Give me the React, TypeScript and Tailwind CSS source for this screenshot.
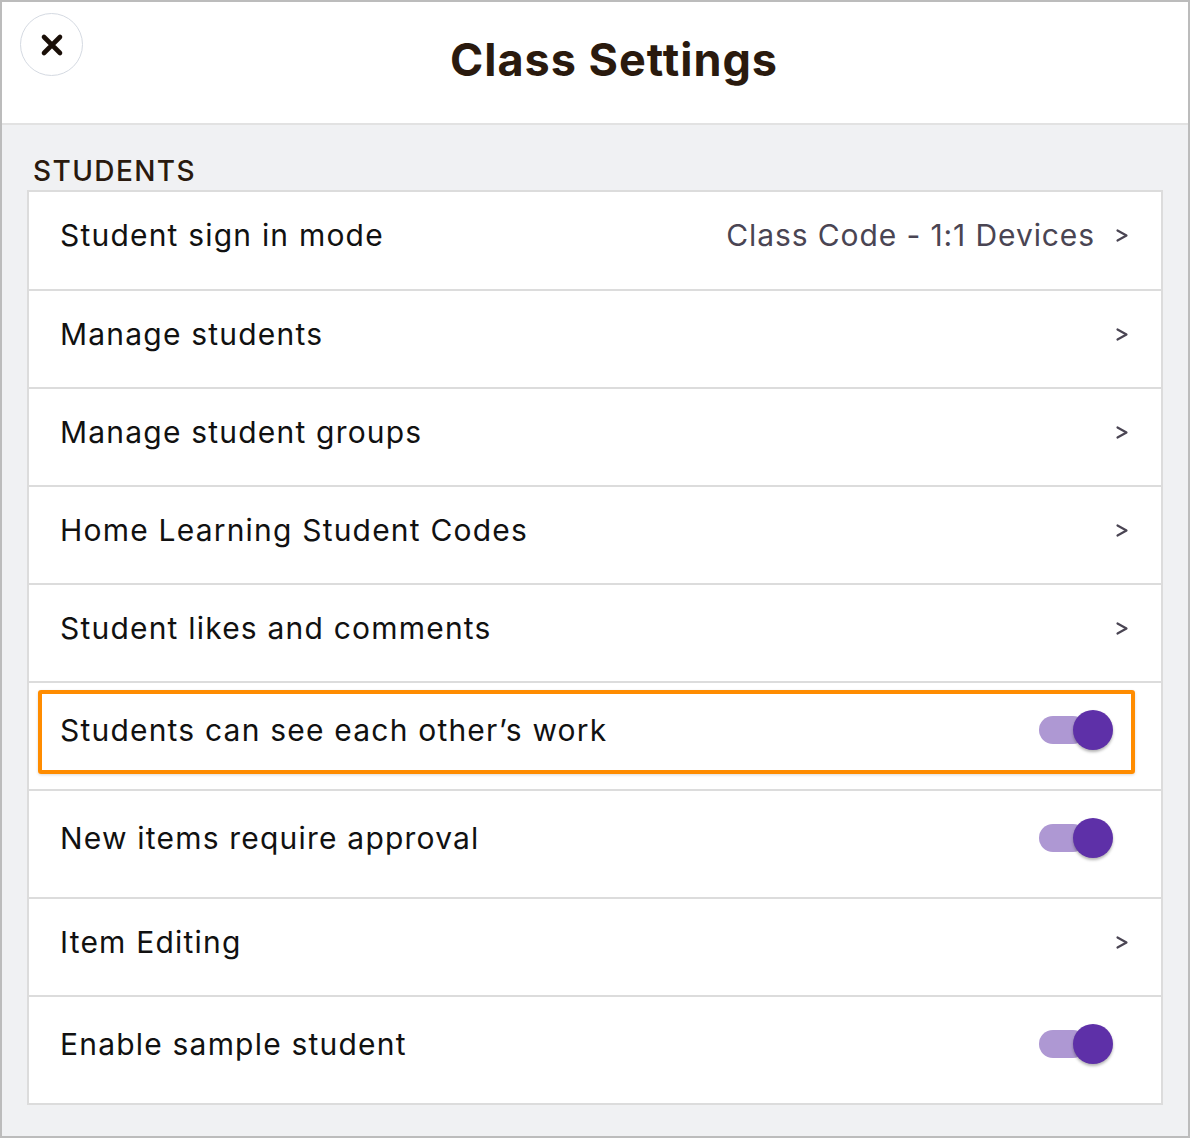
import React from "react";

type Row = { label: string; kind: "chevron" | "toggle"; value?: string; tall?: boolean; highlight?: boolean };

const rows: Row[] = [
  { label: "Student sign in mode", kind: "chevron", value: "Class Code - 1:1 Devices" },
  { label: "Manage students", kind: "chevron" },
  { label: "Manage student groups", kind: "chevron" },
  { label: "Home Learning Student Codes", kind: "chevron" },
  { label: "Student likes and comments", kind: "chevron" },
  { label: "Students can see each other\u2019s work", kind: "toggle", tall: true, highlight: true },
  { label: "New items require approval", kind: "toggle", tall: true },
  { label: "Item Editing", kind: "chevron" },
  { label: "Enable sample student", kind: "toggle", tall: true },
];

function Toggle() {
  return (
    <div className="relative w-[74px] h-[40px] flex items-center">
      <div className="w-[48px] h-[28px] rounded-full bg-[#ae98d3]" />
      <div className="absolute right-0 top-0 w-[40px] h-[40px] rounded-full bg-[#5e30a8] shadow-[0_2px_3px_rgba(0,0,0,0.3)]" />
    </div>
  );
}

function Chevron() {
  return (
    <svg width="14" height="15" viewBox="0 0 14 15" className="block">
      <path d="M2.5 2.5 L11.5 7.5 L2.5 12.5" fill="none" stroke="#4a4553" strokeWidth="2.2" strokeLinecap="round" strokeLinejoin="round" />
    </svg>
  );
}

export default function App() {
  return (
    <div
      className="w-[1190px] h-[1138px] border-2 border-[#bcbcbc] bg-[#f0f1f3] flex flex-col"
      style={{ fontFamily: "Inter, 'Noto Sans', sans-serif" }}
    >
      <div className="h-[123px] shrink-0 bg-white border-b-2 border-[#e2e2e2] flex items-center">
        <button className="ml-[18px] mb-[36px] w-[63px] h-[63px] rounded-full border-[1.5px] border-[#d5dae2] bg-white flex items-center justify-center">
          <svg width="24" height="24" viewBox="0 0 24 24">
            <path d="M4 4 L20 20 M20 4 L4 20" stroke="#1a0f08" strokeWidth="4.6" strokeLinecap="round" />
          </svg>
        </button>
        <div className="flex-1 text-center pr-[43px] mb-[6px] text-[45px] leading-[52px] font-bold text-[#2a1a0e] tracking-[1px]">
          Class Settings
        </div>
      </div>
      <div className="flex-1 px-[25px]">
        <div className="pt-[26px] pl-[6px] text-[28px] leading-[40px] text-[#2a1a0e] tracking-[1.4px] font-medium">STUDENTS</div>
        <div className="mt-[-1px] border-2 border-[#dcdcdc] bg-white flex flex-col">
          {rows.map((r, i) => {
            const h = i === 0 ? "h-[97px] pb-[11px] " : r.tall ? "h-[108px] pb-[12px] border-t-2 border-[#dcdcdc] " : "h-[98px] pb-[10px] border-t-2 border-[#dcdcdc] ";
            return (
              <div
                key={i}
                className={"relative flex items-center pl-[31px] " + (r.kind === "toggle" ? "pr-[48px] " : "pr-[32px] ") + h}
              >
                <div className="flex-1 text-[30px] tracking-[1.2px] text-[#111111]">{r.label}</div>
                {r.value && <div className="text-[30px] tracking-[0.9px] text-[#4a4553] mr-[20px]">{r.value}</div>}
                {r.kind === "chevron" ? <Chevron /> : <Toggle />}
                {r.highlight && (
                  <div className="absolute left-[9px] top-[7px] w-[1097px] h-[84px] border-4 border-[#ff8c00] rounded-[3px] shadow-[0_1px_3px_rgba(0,0,0,0.15)] pointer-events-none" />
                )}
              </div>
            );
          })}
        </div>
      </div>
    </div>
  );
}
